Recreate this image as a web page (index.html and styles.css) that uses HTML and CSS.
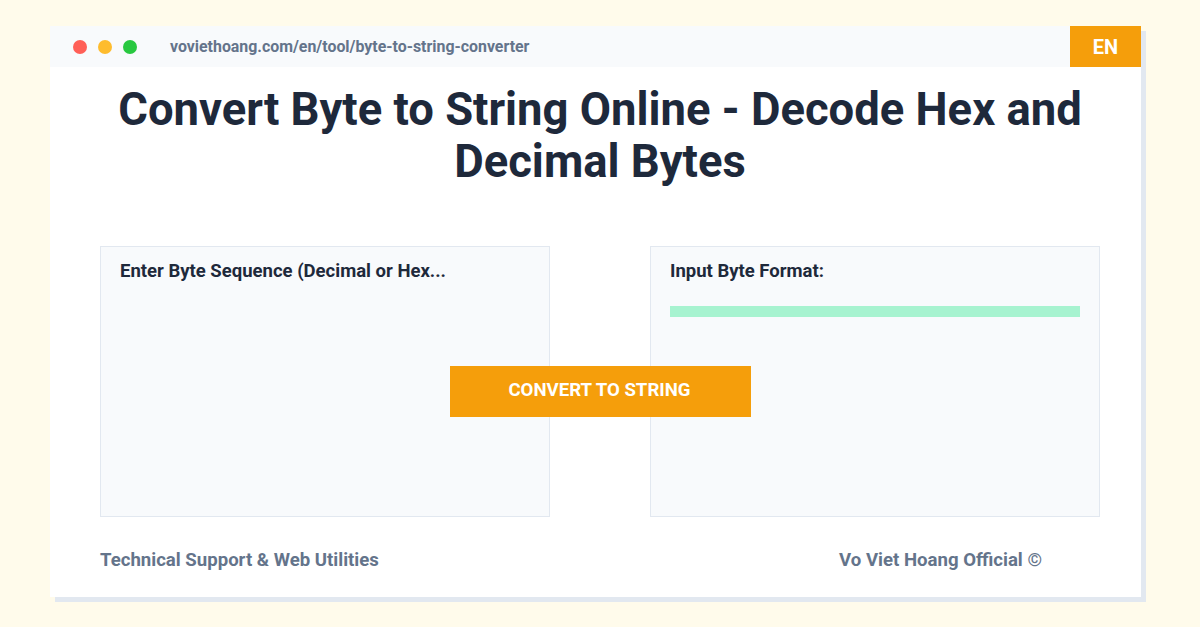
FILE: index.html
```html
<!DOCTYPE html>
<html lang="en">
<head>
<meta charset="utf-8">
<title>Convert Byte to String Online</title>
<link rel="stylesheet" href="styles.css">
</head>
<body>
  <main class="window">
    <header class="topbar">
      <div class="dots">
        <span class="dot dot-red"></span>
        <span class="dot dot-yellow"></span>
        <span class="dot dot-green"></span>
      </div>
      <div class="url">voviethoang.com/en/tool/byte-to-string-converter</div>
      <div class="lang">EN</div>
    </header>

    <h1 class="title">Convert Byte to String Online - Decode Hex and Decimal Bytes</h1>

    <section class="panels">
      <div class="panel">
        <div class="panel-label">Enter Byte Sequence (Decimal or Hex...</div>
      </div>
      <div class="panel">
        <div class="panel-label">Input Byte Format:</div>
        <div class="format-bar"></div>
      </div>
      <button class="convert">CONVERT TO STRING</button>
    </section>

    <footer class="footer">
      <span class="footer-left">Technical Support &amp; Web Utilities</span>
      <span class="footer-right">Vo Viet Hoang Official ©</span>
    </footer>
  </main>
</body>
</html>
```

FILE: styles.css
```css
* {
  box-sizing: border-box;
}

html, body {
  margin: 0;
  padding: 0;
}

body {
  width: 1200px;
  height: 627px;
  background: #fffbeb;
  font-family: Roboto, "Liberation Sans", sans-serif;
  overflow: hidden;
  padding: 26px 0 0 50px;
}

.window {
  width: 1091px;
  height: 571px;
  background: #ffffff;
  box-shadow: 5px 5px 0 #e2e8f0;
  display: flex;
  flex-direction: column;
}

/* browser chrome */
.topbar {
  height: 41px;
  background: #f8fafc;
  display: flex;
  align-items: center;
  padding-left: 23px;
}

.dots {
  display: flex;
  gap: 11px;
}

.dot {
  width: 14px;
  height: 14px;
  border-radius: 50%;
}

.dot-red { background: #ff5f57; }
.dot-yellow { background: #febc2e; }
.dot-green { background: #28c840; }

.url {
  margin-left: 33px;
  font-size: 15.9px;
  font-weight: 700;
  color: #64748b;
  flex: 1;
}

.lang {
  width: 71px;
  height: 41px;
  background: #f59e0b;
  color: #ffffff;
  font-size: 20px;
  font-weight: 700;
  display: flex;
  align-items: center;
  justify-content: center;
}

/* heading */
.title {
  margin: 17px 0 0;
  padding: 0 41px 0 50px;
  text-align: center;
  font-size: 45.4px;
  line-height: 52px;
  font-weight: 700;
  color: #1e293b;
}

/* tool panels */
.panels {
  position: relative;
  margin: 58px 50px 0;
  display: grid;
  grid-template-columns: 450px 450px;
  column-gap: 100px;
  height: 271px;
}

.panel {
  background: #f8fafc;
  border: 1px solid #e2e8f0;
  padding: 13px 19px;
}

.panel-label {
  font-size: 18.5px;
  line-height: 22px;
  font-weight: 700;
  color: #1e293b;
}

.format-bar {
  margin-top: 24px;
  height: 11px;
  background: #a7f3d0;
}

.convert {
  position: absolute;
  top: 120px;
  left: 350px;
  width: 301px;
  height: 51px;
  border: none;
  background: #f59e0b;
  color: #ffffff;
  font-family: Roboto, "Liberation Sans", sans-serif;
  font-size: 18.6px;
  font-weight: 700;
  padding: 0 2px 4px 0;
}

/* footer */
.footer {
  margin: 32px 50px 0;
  display: flex;
  justify-content: space-between;
  font-size: 18.6px;
  line-height: 22px;
  font-weight: 700;
  color: #64748b;
}

.footer-right {
  padding-right: 49px;
}
```
